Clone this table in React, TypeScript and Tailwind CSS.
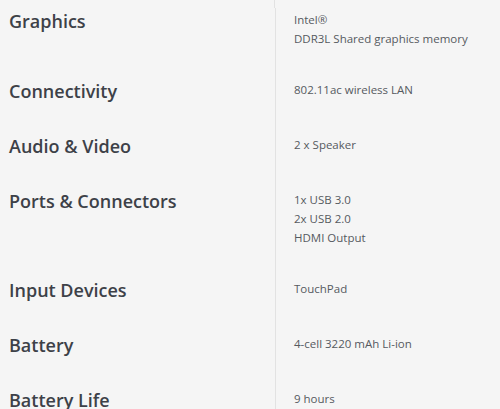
const specs: { label: string; values: string[] }[] = [
  { label: "Graphics", values: ["Intel®", "DDR3L Shared graphics memory"] },
  { label: "Connectivity", values: ["802.11ac wireless LAN"] },
  { label: "Audio & Video", values: ["2 x Speaker"] },
  { label: "Ports & Connectors", values: ["1x USB 3.0", "2x USB 2.0", "HDMI Output"] },
  { label: "Input Devices", values: ["TouchPad"] },
  { label: "Battery", values: ["4-cell 3220 mAh Li-ion"] },
  { label: "Battery Life", values: ["9 hours"] },
];

const SpecRow: React.FC<{ label: string; values: string[] }> = (props) => {
  return (
    <div className="grid grid-cols-[275px_1fr]">
      <div className="pl-[9px] pt-[3px] pb-[31px]">
        <div className="text-[18px] leading-[21px] font-semibold text-[#3d4148]">{props.label}</div>
      </div>
      <div className="border-l border-[#e2e2e2] pl-[18px] pt-[2px] pb-[30px]">
        {props.values.map((v) => (
          <div key={v} className="text-[11.5px] leading-[19px] text-[#555a5f]">
            {v}
          </div>
        ))}
      </div>
    </div>
  );
};

export default function App() {
  return (
    <div className="w-[500px] h-[409px] overflow-hidden bg-[#f5f5f5] font-['Open_Sans',sans-serif]">
      <div className="h-[8px] w-[275px] border-r border-[#e2e2e2]" />
      {specs.map((s) => (
        <SpecRow key={s.label} label={s.label} values={s.values} />
      ))}
    </div>
  );
}
